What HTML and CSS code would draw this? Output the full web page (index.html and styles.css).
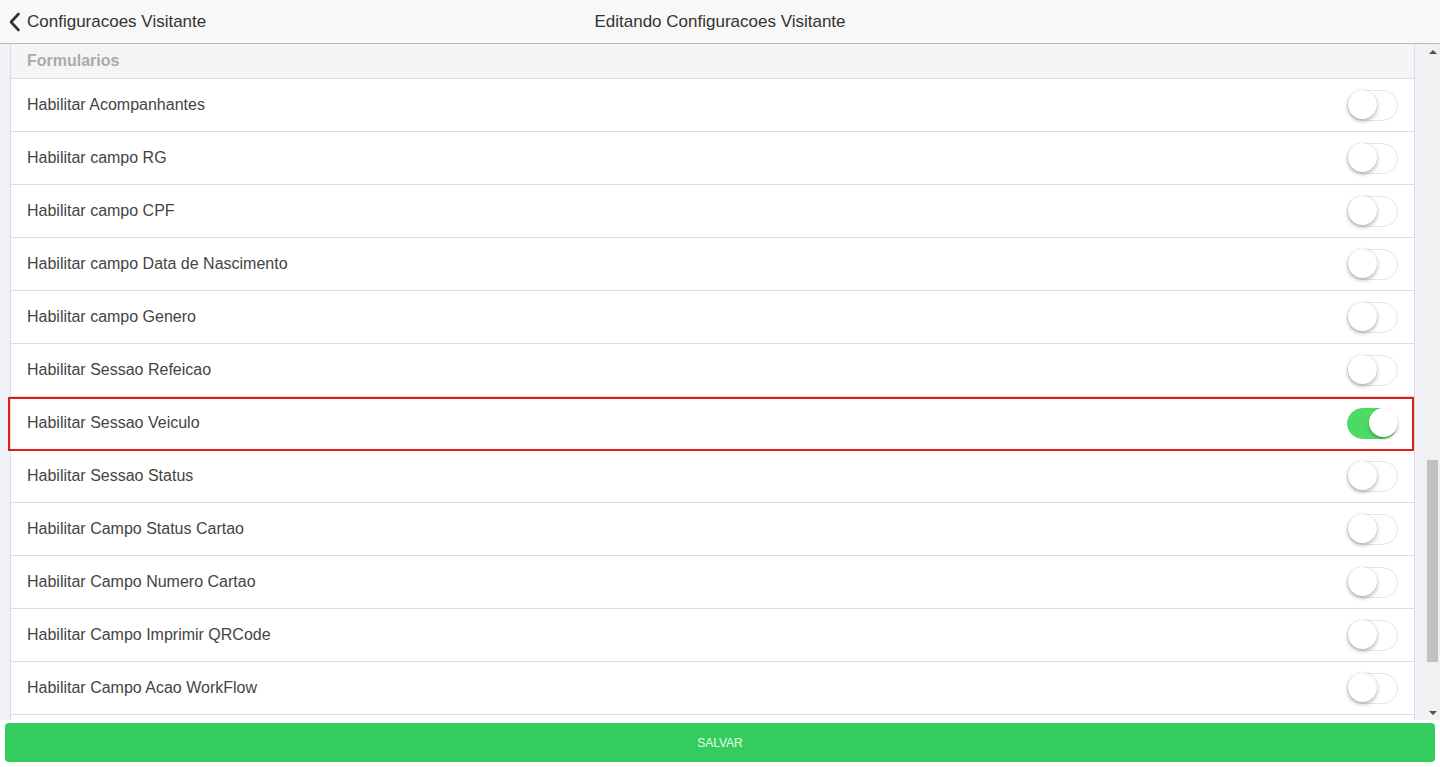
FILE: index.html
```html
<!doctype html>
<html lang="pt">

<head>
	<meta charset="UTF-8">
	<meta name="viewport" content="width=device-width, initial-scale=1.0" />
	<title>Editando Configuracoes Visitante</title>
	<link rel="stylesheet" href="styles.css">
</head>

<body>
	<header class="topbar">
		<a href="#" class="back-link">
			<svg class="back-icon" width="13" height="20" viewBox="0 0 13 20">
				<path d="M10.5 2 L3 10 L10.5 18" fill="none" stroke="#333" stroke-width="2.6" stroke-linecap="round" stroke-linejoin="round" />
			</svg>
			Configuracoes Visitante
		</a>
		<div class="topbar-title">Editando Configuracoes Visitante</div>
		<div class="topbar-spacer"></div>
	</header>

	<div class="main">
		<div class="pane">
			<div class="card">
				<div class="section-title">Formularios</div>
				<div class="item"><span>Habilitar Acompanhantes</span><label class="toggle"><input type="checkbox"><i></i></label></div>
				<div class="item"><span>Habilitar campo RG</span><label class="toggle"><input type="checkbox"><i></i></label></div>
				<div class="item"><span>Habilitar campo CPF</span><label class="toggle"><input type="checkbox"><i></i></label></div>
				<div class="item"><span>Habilitar campo Data de Nascimento</span><label class="toggle"><input type="checkbox"><i></i></label></div>
				<div class="item"><span>Habilitar campo Genero</span><label class="toggle"><input type="checkbox"><i></i></label></div>
				<div class="item"><span>Habilitar Sessao Refeicao</span><label class="toggle"><input type="checkbox"><i></i></label></div>
				<div class="item item-marked"><span>Habilitar Sessao Veiculo</span><label class="toggle"><input type="checkbox" checked><i></i></label></div>
				<div class="item"><span>Habilitar Sessao Status</span><label class="toggle"><input type="checkbox"><i></i></label></div>
				<div class="item"><span>Habilitar Campo Status Cartao</span><label class="toggle"><input type="checkbox"><i></i></label></div>
				<div class="item"><span>Habilitar Campo Numero Cartao</span><label class="toggle"><input type="checkbox"><i></i></label></div>
				<div class="item"><span>Habilitar Campo Imprimir QRCode</span><label class="toggle"><input type="checkbox"><i></i></label></div>
				<div class="item"><span>Habilitar Campo Acao WorkFlow</span><label class="toggle"><input type="checkbox"><i></i></label></div>
				<div class="item"></div>
			</div>
		</div>

		<!-- scrollbar drawn by hand, the real one is hidden in the shot -->
		<div class="scrollbar">
			<div class="scroll-arrow up"></div>
			<div class="scroll-track">
				<div class="scroll-thumb"></div>
			</div>
			<div class="scroll-arrow down"></div>
		</div>
	</div>

	<footer class="footer">
		<button class="btn-save">SALVAR</button>
	</footer>
</body>

</html>
```

FILE: styles.css
```css
:root {
	--text-color: #444444;
	--border-color: #dddddd;
	--page-bg: #eff3f7;
	--green: #34cc5f;
	--toggle-on: #4cd964;
}

* {
	box-sizing: border-box;
	margin: 0;
	padding: 0;
}

html,
body {
	height: 100%;
}

body {
	font-family: "Liberation Sans", Arial, sans-serif;
	font-size: 16px;
	color: var(--text-color);
	background: #ffffff;
	display: flex;
	flex-direction: column;
	overflow: hidden;
}

/* top bar */
.topbar {
	height: 44px;
	flex-shrink: 0;
	background: #f8f8f8;
	border-bottom: 1px solid #b8b8b8;
	display: flex;
	align-items: center;
	padding: 0 8px;
}

.back-link {
	display: flex;
	align-items: center;
	gap: 6px;
	color: #333333;
	text-decoration: none;
	font-size: 17px;
	width: 300px;
}

.back-icon {
	display: block;
	margin-top: 1px;
}

.topbar-title {
	flex: 1;
	text-align: center;
	font-size: 17px;
	color: #333333;
}

.topbar-spacer {
	width: 300px;
}

/* scrolling area */
.main {
	flex: 1;
	display: flex;
	min-height: 0;
	background: var(--page-bg);
}

.pane {
	flex: 1;
	overflow: hidden;
	padding: 0 10px 0 10px;
}

.card {
	background: #ffffff;
	border-left: 1px solid var(--border-color);
	border-right: 1px solid var(--border-color);
}

.section-title {
	height: 35px;
	display: flex;
	align-items: center;
	padding-left: 16px;
	background: #f5f5f5;
	border-bottom: 1px solid var(--border-color);
	color: #aaaaaa;
	font-weight: bold;
	font-size: 16px;
}

.item {
	height: 53px;
	display: flex;
	align-items: center;
	justify-content: space-between;
	padding: 0 16px 0 16px;
	border-bottom: 1px solid var(--border-color);
	position: relative;
}

.item-marked::after {
	content: "";
	position: absolute;
	left: -3px;
	right: 0;
	top: 0;
	bottom: -2px;
	border: 2px solid #e31b1b;
	pointer-events: none;
}

/* ios style switch */
.toggle {
	display: block;
	position: relative;
	width: 51px;
	height: 31px;
}

.toggle input {
	display: none;
}

.toggle i {
	display: block;
	width: 51px;
	height: 31px;
	border-radius: 16px;
	border: 1.5px solid #e6e6e6;
	background: #ffffff;
	position: relative;
}

.toggle i::after {
	content: "";
	position: absolute;
	top: -0.5px;
	left: -0.5px;
	width: 29px;
	height: 29px;
	border-radius: 50%;
	background: #ffffff;
	box-shadow: 0 2px 4px rgba(0, 0, 0, 0.3), 0 0 1px rgba(0, 0, 0, 0.15);
}

.toggle input:checked + i {
	background: var(--toggle-on);
	border-color: var(--toggle-on);
}

.toggle input:checked + i::after {
	left: auto;
	right: -0.5px;
	box-shadow: 0 2px 3px rgba(0, 0, 0, 0.25);
}

/* scrollbar */
.scrollbar {
	width: 15px;
	display: flex;
	flex-direction: column;
	background: #f1f1f1;
}

.scroll-arrow {
	height: 15px;
	display: flex;
	align-items: center;
	justify-content: center;
}

.scroll-arrow::before {
	content: "";
	border-left: 4px solid transparent;
	border-right: 4px solid transparent;
}

.scroll-arrow.up::before {
	border-bottom: 4px solid #505050;
}

.scroll-arrow.down::before {
	border-top: 4px solid #505050;
}

.scroll-track {
	flex: 1;
	padding: 401px 2px 0 2px;
}

.scroll-thumb {
	height: 202px;
	background: #c1c1c1;
}

/* footer */
.footer {
	height: 47px;
	flex-shrink: 0;
	padding: 3px 5px 5px 5px;
	background: #ffffff;
}

.btn-save {
	width: 100%;
	height: 39px;
	border: 0;
	border-radius: 4px;
	background: var(--green);
	color: #e9faec;
	font-family: "Liberation Sans", Arial, sans-serif;
	font-size: 12px;
}
```
